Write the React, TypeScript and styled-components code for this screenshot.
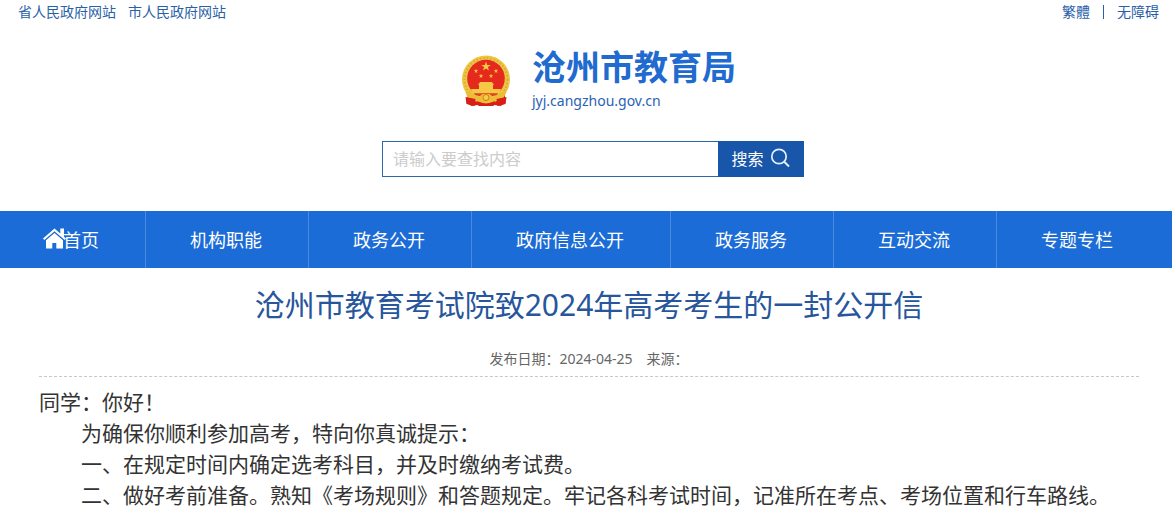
import React from "react";
import styled, { createGlobalStyle } from "styled-components";

const Global = createGlobalStyle`
  * { box-sizing: border-box; }
  body {
    margin: 0;
    background: #fff;
    color: #333;
    font-family: "Noto Sans", "Noto Sans CJK SC", sans-serif;
    font-size: 14px;
  }
  a { color: inherit; text-decoration: none; }
`;

const TopBar = styled.div`
  display: flex;
  justify-content: space-between;
  padding: 0 13px 0 18px;
  height: 24px;
  line-height: 24px;
  color: #2b5fa8;
`;

const TopLinks = styled.nav<{ $gap: number }>`
  display: flex;
  align-items: center;
  gap: ${(p) => p.$gap}px;
`;

const Divider = styled.span`
  width: 1px;
  height: 14px;
  background: #2b5fa8;
`;

const Header = styled.header`
  display: flex;
  flex-direction: column;
  align-items: center;
  padding: 23px 0 34px 14px;
`;

const Brand = styled.a`
  display: flex;
  align-items: center;
  gap: 21px;
  padding-left: 11px;
`;

const BrandName = styled.h1`
  margin: 0;
  font-size: 34px;
  line-height: 40px;
  font-weight: 700;
  color: #1f6bd0;
`;

const BrandUrl = styled.div`
  font-size: 14px;
  line-height: 28px;
  color: #2b62b4;
`;

const SearchForm = styled.form`
  display: flex;
  width: 422px;
  max-width: 100%;
  height: 36px;
  margin-top: 26px;
`;

const SearchInput = styled.input`
  flex: 1;
  min-width: 0;
  padding: 0 10px;
  border: 1px solid #2c67a8;
  border-right: 0;
  outline: 0;
  font: inherit;
  font-size: 16px;
  &::placeholder { color: #ccc; opacity: 1; }
`;

const SearchButton = styled.button`
  display: flex;
  align-items: center;
  justify-content: center;
  gap: 6px;
  width: 86px;
  padding: 0 0 2px;
  border: 0;
  background: #1756a8;
  color: #fff;
  font: inherit;
  font-size: 16px;
`;

const NavBar = styled.nav`
  display: flex;
  overflow: hidden;
  background: #1b6cd6;
  color: #fff;
`;

const NavItem = styled.a`
  display: flex;
  flex: none;
  align-items: center;
  height: 57px;
  padding: 0 46px 2px 44px;
  border-right: 1px solid #4a8be0;
  font-size: 18px;
  white-space: nowrap;
  svg { margin: 0 -3px 0 -1px; }
  &:last-child { border-right: 0; }
`;

const Article = styled.article`
  padding: 0 33px 0 39px;
`;

const Title = styled.h2`
  margin: 0;
  padding-top: 17px;
  font-size: 30px;
  line-height: 40px;
  font-weight: 400;
  text-align: center;
  color: #27569c;
`;

const Meta = styled.div`
  display: flex;
  justify-content: center;
  gap: 14px;
  margin-top: 21px;
  padding-bottom: 5px;
  border-bottom: 1px dashed #c8c8c8;
  line-height: 25px;
  color: #666;
`;

const Body = styled.div`
  padding-top: 10px;
  font-size: 21px;
  line-height: 31px;
`;

const Paragraph = styled.p<{ $indent?: boolean }>`
  margin: 0;
  text-indent: ${(p) => (p.$indent ? "2em" : "0")};
`;

const star = (cx: number, cy: number, r: number) =>
  Array.from({ length: 10 }, (_, i) => {
    const a = (Math.PI / 5) * i - Math.PI / 2;
    const d = i % 2 ? r * 0.4 : r;
    return `${(cx + d * Math.cos(a)).toFixed(2)},${(cy + d * Math.sin(a)).toFixed(2)}`;
  }).join(" ");

const Emblem = () => (
  <svg width="50" height="52" viewBox="0 0 49 52" aria-hidden="true">
    <path d="M6 36L5 48l5 3 6-1 8.500 1 8.500-1 6 1 5-3-1-12z" fill="#d71f18" />
    <circle cx="24.500" cy="24.500" r="24" fill="#edc544" />
    <circle cx="24.500" cy="24.500" r="21.500" fill="none" stroke="#dcab30" strokeWidth="2" strokeDasharray="1.500 2" />
    <circle cx="24.500" cy="23.500" r="18.800" fill="#e52a1d" />
    <g fill="#f5c945">
      <polygon points={star(24.5, 11.5, 5)} />
      <polygon points={star(14.5, 16, 2.4)} />
      <polygon points={star(34.5, 16, 2.4)} />
      <polygon points={star(19.5, 21, 2.4)} />
      <polygon points={star(29.5, 21, 2.4)} />
      <path d="M18.500 27h12l2 3h-16zM17.500 30h14v4h8l-2 4.500h-26l-2-4.500h8z" />
    </g>
    <path d="M12 38.500h25l-2 2H14z" fill="#d9481f" />
    <path d="M4 37c6 0 10 3 13 5l4-3h7l4 3c3-2 7-5 13-5l-3 6c-4 0-6 2-8 4l-6-1-3.500 2-3.500-2-6 1c-2-2-5-4-9-4z" fill="#edbd3a" />
    <path d="M4 42l10 2-1 7-8-2zM45 42l-10 2 1 7 8-2zM15 46l9.500 3 9.500-3-2 5H17z" fill="#d71f18" />
    <circle cx="24.500" cy="42.500" r="3" fill="#f5cf45" stroke="#d9781f" />
  </svg>
);

const SearchIcon = () => (
  <svg width="21" height="20" viewBox="0 0 21 20" fill="none" stroke="#e4f0ff" aria-hidden="true">
    <circle cx="9" cy="8.500" r="7.200" strokeWidth="1.700" />
    <path d="M14 13.500l5 5" strokeWidth="2" />
  </svg>
);

const HomeIcon = () => (
  <svg width="23" height="21" viewBox="0 0 23 21" aria-hidden="true">
    <path d="M11.500 0.500L0 10.500l1.300 1.500 10.200-8.700L21.700 12l1.300-1.500-2-1.700V0.500h-3.700v5z" fill="#fff" />
    <path d="M11.500 5L3 12.200V20.500h6.300V15h4v5.500H20v-8.300z" fill="#fff" />
  </svg>
);

const sections = ["机构职能", "政务公开", "政府信息公开", "政务服务", "互动交流", "专题专栏"];

const paragraphs = [
  "为确保你顺利参加高考，特向你真诚提示：",
  "一、在规定时间内确定选考科目，并及时缴纳考试费。",
  "二、做好考前准备。熟知《考场规则》和答题规定。牢记各科考试时间，记准所在考点、考场位置和行车路线。",
];

export default function App() {
  return (
    <>
      <Global />
      <TopBar>
        <TopLinks $gap={12}>
          <a href="#province">省人民政府网站</a>
          <a href="#city">市人民政府网站</a>
        </TopLinks>
        <TopLinks $gap={13}>
          <a href="#traditional" lang="zh-Hant">繁體</a>
          <Divider />
          <a href="#accessible">无障碍</a>
        </TopLinks>
      </TopBar>
      <Header>
        <Brand href="#home">
          <Emblem />
          <div>
            <BrandName>沧州市教育局</BrandName>
            <BrandUrl>jyj.cangzhou.gov.cn</BrandUrl>
          </div>
        </Brand>
        <SearchForm role="search" onSubmit={(e) => e.preventDefault()}>
          <SearchInput type="text" aria-label="搜索" placeholder="请输入要查找内容" />
          <SearchButton type="submit">
            搜索
            <SearchIcon />
          </SearchButton>
        </SearchForm>
      </Header>
      <NavBar>
        <NavItem href="#home">
          <HomeIcon />
          首页
        </NavItem>
        {sections.map((name) => (
          <NavItem key={name} href={`#${name}`}>{name}</NavItem>
        ))}
      </NavBar>
      <Article>
        <Title>沧州市教育考试院致2024年高考考生的一封公开信</Title>
        <Meta>
          <span>发布日期：2024-04-25</span>
          <span>来源：</span>
        </Meta>
        <Body>
          <Paragraph>同学：你好！</Paragraph>
          {paragraphs.map((text) => (
            <Paragraph key={text} $indent>{text}</Paragraph>
          ))}
        </Body>
      </Article>
    </>
  );
}
